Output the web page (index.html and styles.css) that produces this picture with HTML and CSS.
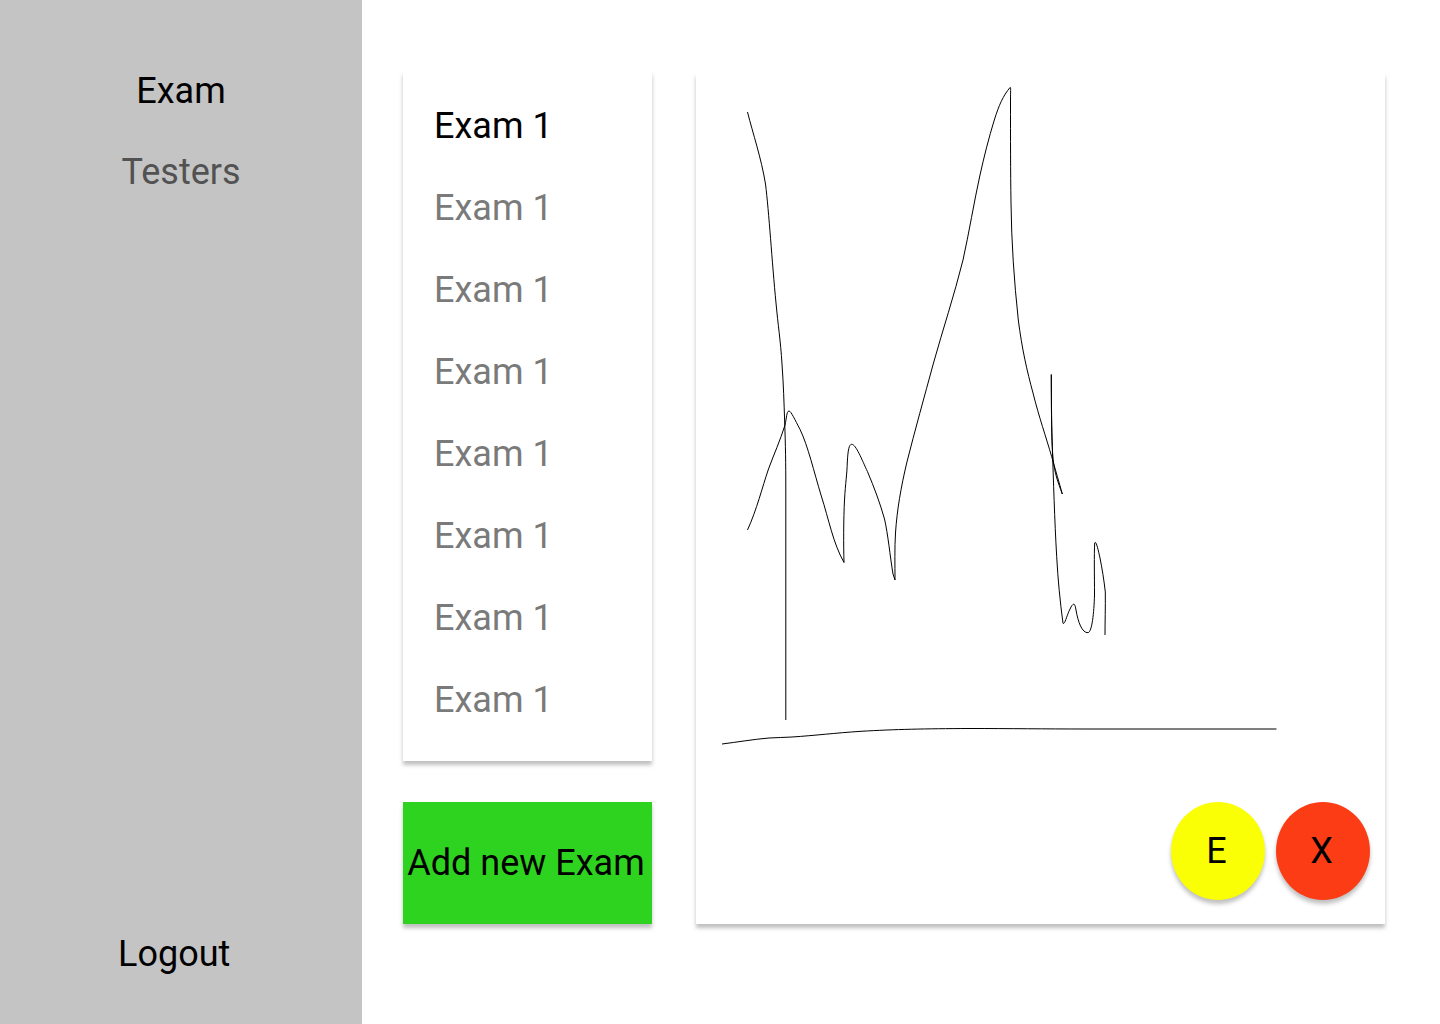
FILE: index.html
```html
<!DOCTYPE html>
<html lang="en">
<head>
  <meta charset="utf-8">
  <meta name="viewport" content="width=device-width, initial-scale=1">
  <title>Exam</title>
  <link rel="stylesheet" href="styles.css">
</head>
<body class="app">
  <aside class="sidebar">
    <nav class="menu">
      <a class="menu-link menu-link-active" href="#exam">Exam</a>
      <a class="menu-link" href="#testers">Testers</a>
    </nav>
    <a class="logout" href="#logout">Logout</a>
  </aside>
  <main class="content">
    <section class="exams">
      <ul class="exam-list">
        <li><a class="exam-link exam-link-active" href="#exam-1">Exam 1</a></li>
        <li><a class="exam-link" href="#exam-2">Exam 1</a></li>
        <li><a class="exam-link" href="#exam-3">Exam 1</a></li>
        <li><a class="exam-link" href="#exam-4">Exam 1</a></li>
        <li><a class="exam-link" href="#exam-5">Exam 1</a></li>
        <li><a class="exam-link" href="#exam-6">Exam 1</a></li>
        <li><a class="exam-link" href="#exam-7">Exam 1</a></li>
        <li><a class="exam-link" href="#exam-8">Exam 1</a></li>
      </ul>
      <button class="add-button" type="button">Add new Exam</button>
    </section>
    <section class="panel">
      <svg class="chart" viewBox="696 73 689 700" role="img" aria-label="Exam results">
        <path d="M747.5 112C753 134 761 157 765.500 184C769 212 772 262 776 303C778 325 780.500 340 782 364C783.500 385 784 402 784.700 423C785.500 445 785.800 462 785.800 490V720"/>
        <path d="M722 744C738 742 752 739.500 769 738C777 737.500 784 737.500 792 737C815 735.500 835 733 861 731.300C895 729.300 925 728.700 969 728.500C1010 728.500 1045 729 1085 729H1276.500"/>
        <path d="M747.5 530C757 509 762 488 768.500 469C774 454 780 441 785 425C786.500 419 786.500 411 789 411C791 411 795 420 800 429.300C808 446 814 472 821 495C829 520 833 543 844 562.500C843.500 545 843.500 520 844.500 500C845.500 482 847 475 847.300 462C848 450 849 444.300 851.700 444.300C856 444.300 862 460 867.500 471.700C874 487 880 503 884.500 519C888 534 890 556 893 574L895 580C895 565 894.500 548 895.500 533C897 510 901 487 906.700 463C915 430 924 398 933.500 363C943 329 954 296 963 260C969 233 974 202 980 175C984 157 989 137 994.300 120C999 105 1003 96 1010 87.500C1011 87 1010.500 90 1010.500 100C1010.500 140 1010.500 170 1011 203C1011.500 242 1014 280 1018.300 320C1022 349 1027 371 1033 393C1039 417 1046 437 1051.700 456.700C1056 472 1059 482 1062.300 494C1058 482 1055 475 1053 459C1051.500 440 1051.500 405 1051.300 374.500C1051.300 405 1051.500 430 1052.300 447C1053.500 480 1054.500 520 1056.700 556.700C1058 580 1060 601 1063 623.300C1065 625 1067 614 1071 607C1074 602 1075 604 1076 610C1078 622 1082 633 1088 632.700C1092 632 1094 613 1094.500 595C1094.500 575 1094 555 1094.700 543C1096 540 1098 549 1100 558C1102 568 1104 580 1105.300 592C1105.500 608 1105 622 1105 635"/>
      </svg>
      <div class="actions">
        <button class="round-button edit-button" type="button" aria-label="E, edit exam">E</button>
        <button class="round-button delete-button" type="button" aria-label="X, delete exam">X</button>
      </div>
    </section>
  </main>
</body>
</html>
```
FILE: styles.css
```css
* {
  box-sizing: border-box;
}

body,
button {
  font-family: Roboto, "Liberation Sans", sans-serif;
  font-size: 36px;
  line-height: 42px;
  color: #000;
}

a {
  color: inherit;
  text-decoration: none;
}

button {
  padding: 0 3px 0 0;
  border: 0;
  cursor: pointer;
  white-space: nowrap;
}

.app {
  display: grid;
  grid-template-columns: 362px 1fr;
  min-height: 100vh;
  margin: 0;
  background: #fff;
}

.sidebar {
  display: flex;
  flex-direction: column;
  justify-content: space-between;
  padding: 70px 0 49px;
  background: #c4c4c4;
}

.menu {
  display: flex;
  flex-direction: column;
  align-items: center;
  gap: 39px;
}

.menu-link {
  color: #525252;
}

.menu-link-active {
  color: #000;
}

.logout {
  align-self: flex-start;
  margin-left: 118px;
}

.content {
  display: grid;
  grid-template-columns: 249px 1fr;
  gap: 44px;
  padding: 71px 55px 100px 41px;
}

.exams {
  display: flex;
  flex-direction: column;
  gap: 41px;
}

.exam-list,
.panel,
.add-button,
.round-button {
  box-shadow: 0 4px 4px rgba(0, 0, 0, 0.25);
}

.exam-list {
  display: flex;
  flex: 1;
  flex-direction: column;
  gap: 40px;
  margin: 0;
  padding: 34px 31px;
  background: #fff;
  list-style: none;
}

.exam-link {
  display: block;
  color: #7a7a7a;
}

.exam-link-active {
  color: #000;
}

.add-button {
  height: 122px;
  background: #2ed31f;
}

.panel {
  display: flex;
  flex-direction: column;
  justify-content: space-between;
  margin-top: 2px;
  padding-bottom: 24px;
  background: #fff;
}

.chart {
  display: block;
  width: 100%;
  fill: none;
  stroke: #000;
  stroke-width: 1;
}

.actions {
  display: flex;
  justify-content: flex-end;
  gap: 11px;
  padding-right: 15px;
}

.round-button {
  width: 94px;
  height: 98px;
  border-radius: 50%;
}

.edit-button {
  background: #fbff05;
}

.delete-button {
  background: #fb3c14;
}
```
